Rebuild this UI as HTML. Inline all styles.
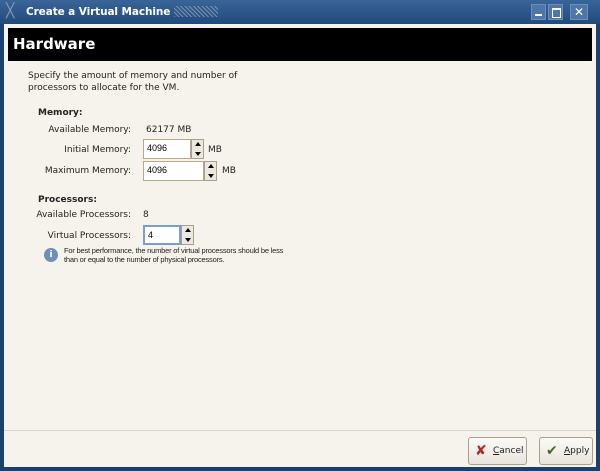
<!DOCTYPE html>
<html><head><style>
body{margin:0;width:600px;height:471px;overflow:hidden;font-family:"DejaVu Sans","Liberation Sans",sans-serif;background:#1d3f6d;position:relative}
.a{position:absolute}
.t{font-size:9px;color:#222;white-space:nowrap}
.r{text-align:right}
.inp{position:absolute;background:#fff;border:1px solid #b7a98a;box-sizing:border-box;font-size:9px;padding:3px 0 0 3px;font-family:"Liberation Sans",sans-serif}
.sp{position:absolute;background:#ece8df;border:1px solid #a9a08c;box-sizing:border-box}
.sp:before{content:"";position:absolute;left:3px;top:2px;border:3px solid transparent;border-bottom:4px solid #000;border-top:0}
.sp:after{content:"";position:absolute;left:3px;bottom:2px;border:3px solid transparent;border-top:4px solid #000;border-bottom:0}
.btn{position:absolute;border:1px solid #a9a08c;border-radius:3px;background:linear-gradient(#fbfaf7,#e9e5dc);box-sizing:border-box;font-size:9px;color:#222}
.wb{position:absolute;top:4px;width:15px;height:16px;background:#4f76a8;border:1px solid #6d8fbc;box-sizing:border-box}
</style></head><body>
<div class="a" style="left:0;top:0;width:600px;height:24px;background:linear-gradient(#3a6599,#21497c)"></div>
<div class="a" style="left:6px;top:3px;font-size:14px;color:#8a9ab0">╳</div>
<div class="a" style="left:26px;top:6px;font-size:10.5px;font-weight:bold;color:#fff;letter-spacing:-.1px">Create a Virtual Machine</div>
<div class="a" style="left:174px;top:6px;width:44px;height:11px;background:repeating-linear-gradient(45deg,#9ab 0 1px,transparent 1px 3px);opacity:.7"></div>
<div class="wb" style="left:531px"><div class="a" style="left:3px;top:9px;width:7px;height:2px;background:#fff"></div></div>
<div class="wb" style="left:548px"><div class="a" style="left:3px;top:3px;width:7px;height:7px;border:1px solid #fff;border-top-width:2px"></div></div>
<div class="wb" style="left:570px;width:18px;text-align:center;color:#fff;font-weight:bold;font-size:12px;line-height:14px">✕</div>
<div class="a" style="left:4px;top:24px;width:592px;height:443px;background:#f6f3ec"></div>
<div class="a" style="left:8px;top:28px;width:584px;height:33px;background:#000"></div>
<div class="a" style="left:13px;top:35px;font-size:15px;font-weight:bold;color:#fff">Hardware</div>
<div class="a" style="left:4px;top:430px;width:592px;height:1px;background:#dcd6c8"></div>
<div class="a t" style="left:28px;top:70px;line-height:12px">Specify the amount of memory and number of<br>processors to allocate for the VM.</div>
<div class="a t" style="left:38px;top:108px;font-weight:bold">Memory:</div>
<div class="a t r" style="left:0;width:131px;top:125px">Available Memory:</div>
<div class="a t" style="left:146px;top:125px">62177 MB</div>
<div class="a t r" style="left:0;width:131px;top:145px">Initial Memory:</div>
<div class="inp" style="left:143px;top:139px;width:48px;height:20px">4096</div>
<div class="sp" style="left:191px;top:139px;width:13px;height:20px"></div>
<div class="a t" style="left:208px;top:145px">MB</div>
<div class="a t r" style="left:0;width:131px;top:166px">Maximum Memory:</div>
<div class="inp" style="left:143px;top:161px;width:61px;height:20px">4096</div>
<div class="sp" style="left:204px;top:161px;width:13px;height:20px"></div>
<div class="a t" style="left:222px;top:166px">MB</div>
<div class="a t" style="left:38px;top:195px;font-weight:bold">Processors:</div>
<div class="a t r" style="left:0;width:131px;top:210px">Available Processors:</div>
<div class="a t" style="left:143px;top:210px">8</div>
<div class="a t r" style="left:0;width:131px;top:231px">Virtual Processors:</div>
<div class="inp" style="left:143px;top:225px;width:38px;height:20px;border:2px solid #7a9ccf">4</div>
<div class="sp" style="left:181px;top:225px;width:13px;height:20px"></div>
<div class="a" style="left:44px;top:248px;width:14px;height:14px;border-radius:50%;background:#6f8fb8;color:#fff;font-size:9px;font-weight:bold;text-align:center;line-height:14px">i</div>
<div class="a" style="left:64px;top:246px;font-size:7.5px;line-height:9px;letter-spacing:-.2px;color:#222;font-family:'Liberation Sans',sans-serif">For best performance, the number of virtual processors should be less<br>than or equal to the number of physical processors.</div>
<div class="btn" style="left:468px;top:437px;width:59px;height:28px"><span class="a" style="left:6px;top:5px;font-size:14px;color:#b02a2a;font-weight:bold">✘</span><span class="a" style="left:24px;top:8px"><u>C</u>ancel</span></div>
<div class="btn" style="left:539px;top:437px;width:54px;height:28px"><span class="a" style="left:6px;top:5px;font-size:14px;color:#3e6b2c;font-weight:bold">✔</span><span class="a" style="left:24px;top:8px"><u>A</u>pply</span></div>
</body></html>
